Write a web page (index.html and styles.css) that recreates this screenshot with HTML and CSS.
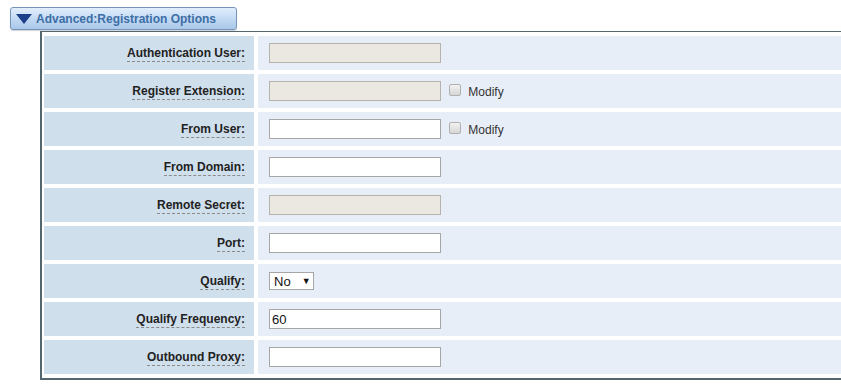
FILE: index.html
```html
<!DOCTYPE html>
<html lang="en">
    <head>
        <meta charset="UTF-8">
        <meta name="viewport" content="width=device-width, initial-scale=1.0">
        <title>Registration Options</title>
        <link rel="stylesheet" href="styles.css">
    </head>
    <body>
        <div class="toggle">
            <svg class="arrow" width="16" height="10" viewBox="0 0 16 10">
                <polygon points="0,0 16,0 8,10" fill="#1c3f8c"/>
            </svg>
            <span>Advanced:Registration Options</span>
        </div>

        <div class="panel">
            <table class="options">
                <tr>
                    <th><span class="tip">Authentication User:</span></th>
                    <td><input type="text" class="field" disabled></td>
                </tr>
                <tr>
                    <th><span class="tip">Register Extension:</span></th>
                    <td>
                        <input type="text" class="field" disabled>
                        <label class="modify"><span class="check"></span>Modify</label>
                    </td>
                </tr>
                <tr>
                    <th><span class="tip">From User:</span></th>
                    <td>
                        <input type="text" class="field">
                        <label class="modify"><span class="check"></span>Modify</label>
                    </td>
                </tr>
                <tr>
                    <th><span class="tip">From Domain:</span></th>
                    <td><input type="text" class="field"></td>
                </tr>
                <tr>
                    <th><span class="tip">Remote Secret:</span></th>
                    <td><input type="text" class="field" disabled></td>
                </tr>
                <tr>
                    <th><span class="tip">Port:</span></th>
                    <td><input type="text" class="field"></td>
                </tr>
                <tr>
                    <th><span class="tip">Qualify:</span></th>
                    <td><span class="select">No</span></td>
                </tr>
                <tr>
                    <th><span class="tip">Qualify Frequency:</span></th>
                    <td><input type="text" class="field" value="60"></td>
                </tr>
                <tr>
                    <th><span class="tip">Outbound Proxy:</span></th>
                    <td><input type="text" class="field"></td>
                </tr>
            </table>
        </div>
    </body>
</html>
```

FILE: styles.css
```css
* {
    margin: 0;
    padding: 0;
    box-sizing: border-box;
}

body {
    font-family: "Liberation Sans", Arial, sans-serif;
    font-size: 12px;
    color: #222;
    background: #fff;
    overflow: hidden;
}

/* 折叠按钮 */
.toggle {
    display: flex;
    align-items: center;
    width: 227px;
    height: 23px;
    margin: 7px 0 0 10px;
    padding-left: 5px;
    border: 1px solid #7594b8;
    border-radius: 3px;
    background-image: linear-gradient(180deg, #e2eefb 0%, #c3daf3 50%, #a9c8ea 100%);
    box-shadow: 0 1px 1px rgba(60, 80, 110, 0.25);
    color: #3d6ea6;
    font-weight: 700;
    font-size: 12px;
}

.arrow {
    margin-right: 4px;
}

/* 表格区域，右侧超出窗口 */
.panel {
    margin: 1px 0 0 40px;
    border-top: 1px solid #56666e;
    border-bottom: 2px solid #56666e;
    border-left: 2px solid #56666e;
}

.options {
    width: calc(100% + 20px);
    margin-left: -2px;
    border-spacing: 4px;
}

.options th {
    width: 210px;
    height: 34px;
    padding-right: 9px;
    text-align: right;
    font-weight: 700;
    background-color: #d0dfec;
}

.tip {
    border-bottom: 1px dashed #8a8a8a;
    padding-bottom: 1px;
}

.options td {
    padding-left: 11px;
    background-color: #e8eef7;
}

.field {
    width: 172px;
    height: 20px;
    padding: 0 2px;
    border: 1px solid #a6a6a6;
    background: #fff;
    font: 13px "Liberation Sans", Arial, sans-serif;
    color: #111;
    vertical-align: middle;
}

.field:disabled {
    background-color: #ebe8e2;
    border-color: #b5b3ae;
}

.modify {
    display: inline-flex;
    align-items: center;
    margin-left: 5px;
    color: #333;
    font-size: 12px;
    vertical-align: middle;
    position: relative;
    top: 1px;
}

.check {
    display: inline-block;
    width: 12px;
    height: 12px;
    margin-right: 7px;
    margin-top: -5px;
    border: 1px solid #b0b0b0;
    border-radius: 2px;
    background-image: linear-gradient(180deg, #f2f2f2 0%, #d6d6d6 100%);
}

.select {
    display: inline-flex;
    align-items: center;
    width: 45px;
    height: 18px;
    padding-left: 4px;
    border: 1px solid #a6a6a6;
    background: #fff;
    font-size: 13px;
    color: #111;
    vertical-align: middle;
}

.select::after {
    content: "\25BC";
    font-size: 9px;
    margin-left: 11px;
    color: #111;
}
```
